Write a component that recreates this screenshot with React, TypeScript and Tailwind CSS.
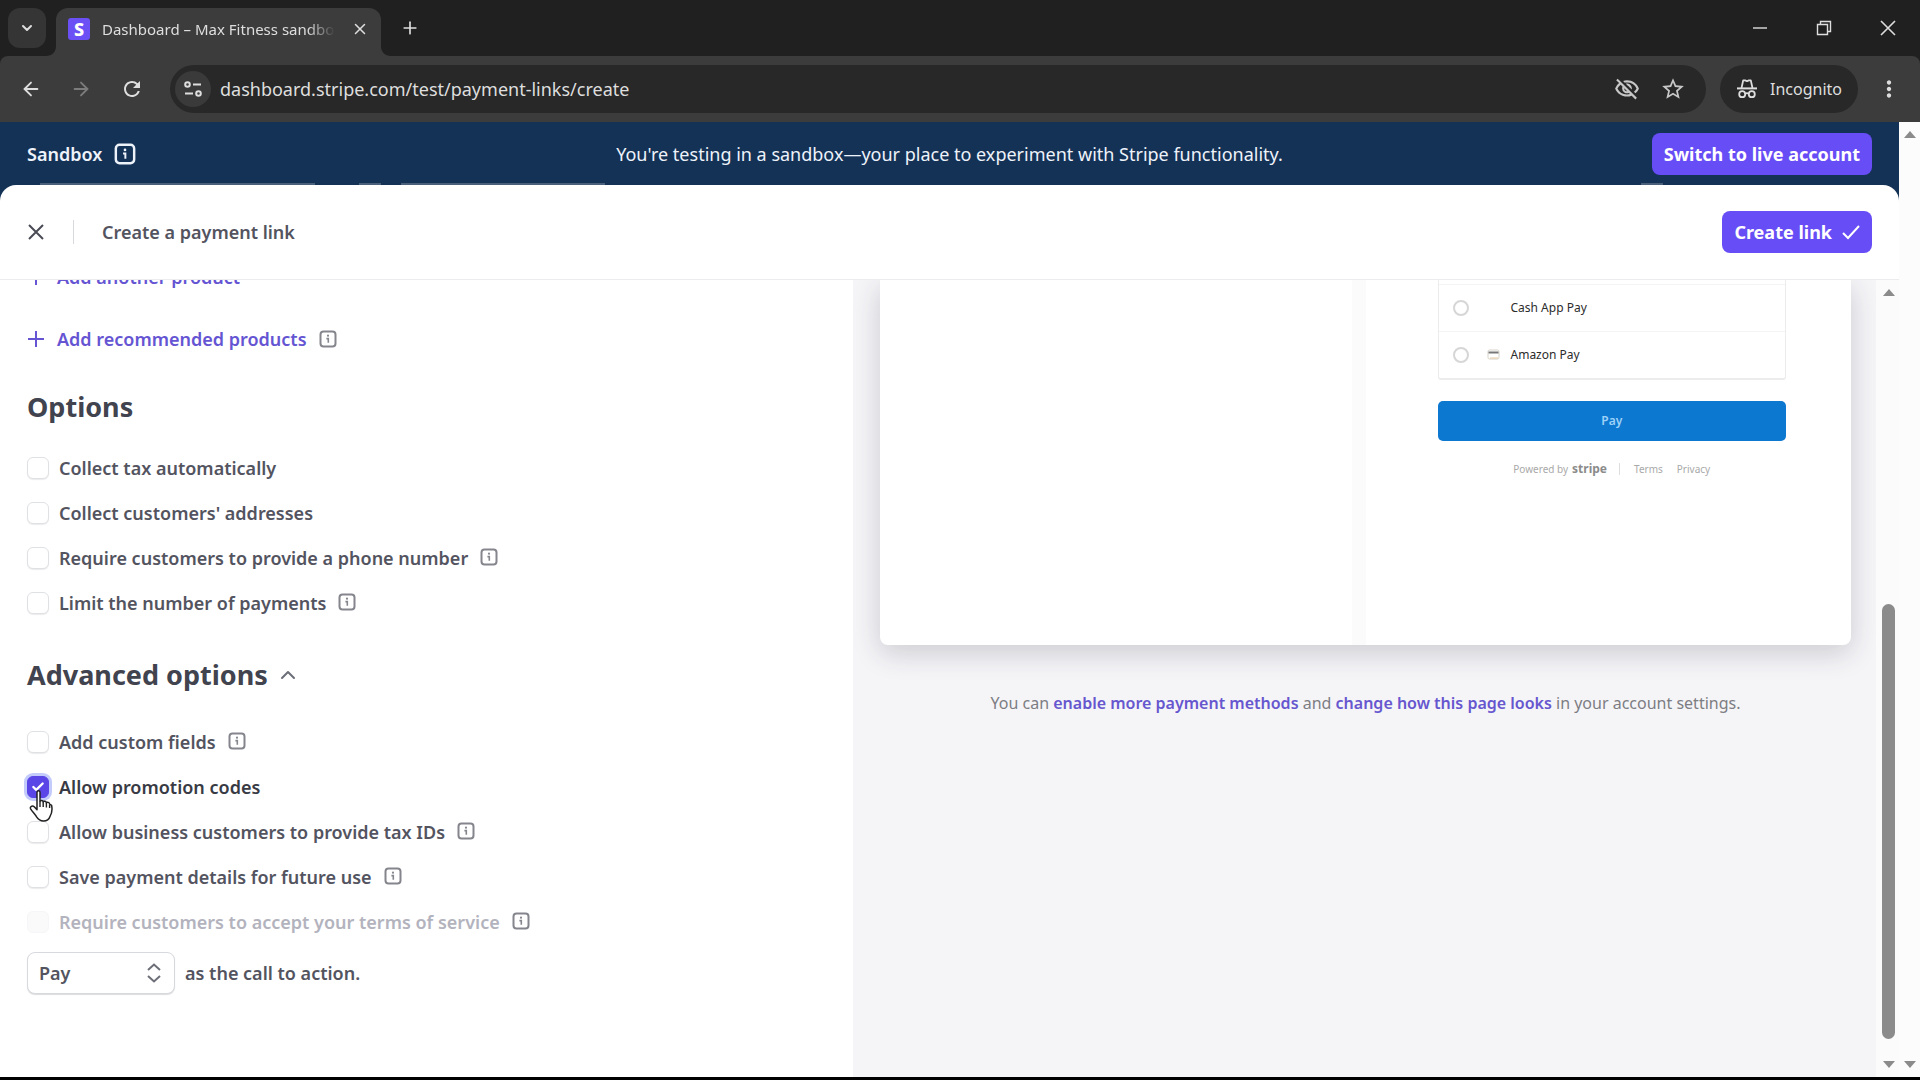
import type { ReactNode } from "react";
import { ArrowLeft, ArrowRight, Check, ChevronDown, ChevronUp, Plus, X } from "lucide-react";
import { MdMoreVert, MdOutlineStarBorder, MdOutlineVisibilityOff, MdRefresh } from "react-icons/md";

type Option = {
    id: string;
    label: string;
    info?: boolean;
    checked?: boolean;
    disabled?: boolean;
};

const basicOptions: Option[] = [
    { id: "tax", label: "Collect tax automatically" },
    { id: "addresses", label: "Collect customers' addresses" },
    { id: "phone", label: "Require customers to provide a phone number", info: true },
    { id: "limit", label: "Limit the number of payments", info: true },
];

const advancedOptions: Option[] = [
    { id: "custom-fields", label: "Add custom fields", info: true },
    { id: "promo", label: "Allow promotion codes", checked: true },
    { id: "tax-ids", label: "Allow business customers to provide tax IDs", info: true },
    { id: "save", label: "Save payment details for future use", info: true },
    { id: "terms", label: "Require customers to accept your terms of service", info: true, disabled: true },
];

function InfoIcon({ className }: { className?: string }) {
    return (
        <svg viewBox="0 0 18 18" fill="none" className={className} aria-hidden="true">
            <rect x="1.5" y="1.5" width="15" height="15" rx="3" stroke="currentColor" strokeWidth="2" />
            <circle cx="9" cy="5.7" r="1.1" fill="currentColor" />
            <path d="M7.4 8.6H9.3V12.8" stroke="currentColor" strokeWidth="1.6" />
        </svg>
    );
}

function IncognitoIcon() {
    return (
        <svg viewBox="0 0 22 22" fill="none" className="w-[22px] h-[22px]" stroke="currentColor" strokeWidth="1.8" aria-hidden="true">
            <path d="M5.5 10L7.2 2.4H9.2L11 3.2L12.8 2.4H14.8L16.5 10" strokeLinejoin="round" />
            <path d="M1 10.4H21" strokeWidth="2" />
            <circle cx="6.2" cy="16.2" r="3" />
            <circle cx="15.8" cy="16.2" r="3" />
            <path d="M9.2 15.8C10.3 15 11.7 15 12.8 15.8" />
        </svg>
    );
}

function SiteSettingsIcon() {
    return (
        <svg viewBox="0 0 20 20" fill="none" className="w-5 h-5" stroke="currentColor" strokeWidth="2" aria-hidden="true">
            <circle cx="4.5" cy="5.5" r="2.3" />
            <path d="M10 5.5H18M2 14.5H10" />
            <circle cx="15.5" cy="14.5" r="2.3" />
        </svg>
    );
}

function HandCursor() {
    return (
        <svg viewBox="0 0 24 32" className="absolute left-0.5 top-3.5 z-10 w-6 h-8" aria-hidden="true">
            <path
                d="M8 2.2C8 .4 11 .4 11 2.2V11.5C11.4 10 14 10.2 14.2 11.8C14.8 10.7 17.2 11 17.4 12.8C18.2 11.8 20.4 12.2 20.6 14L22.6 15.4C23.4 19 23 23 21 26.5C20 29.5 18 31 14.5 31C11 31 9.4 29.8 7.8 27.2C6 24 3.6 22 1.6 18.8C.6 16.6 3.4 15 5.2 16.8L8 19.6Z"
                fill="#fff"
                stroke="#222"
                strokeWidth="1.5"
                strokeLinejoin="round"
            />
            <path d="M11 11.5V17M14.2 12V17M17.4 13V17.4M20.6 14.4V18" stroke="#222" strokeWidth="1.4" fill="none" />
        </svg>
    );
}

function ScrollArrow({ down }: { down?: boolean }) {
    return (
        <svg viewBox="0 0 12 7" className="w-3 h-[7px] fill-[#8b8b8b]" aria-hidden="true">
            {down ? <path d="M0 0H12L6 7Z" /> : <path d="M0 7H12L6 0Z" />}
        </svg>
    );
}

function BrowserChrome() {
    return (
        <header className="bg-[#202020] text-[#dedede]">
            <div className="flex items-end h-14 pl-2">
                <button aria-label="Search tabs" className="flex items-center justify-center w-[38px] h-10 mb-2 rounded-xl bg-[#353535]">
                    <ChevronDown className="w-4 h-4" strokeWidth={3} />
                </button>
                <div className="relative flex items-center w-[325px] h-12 ml-[10px] px-3 pb-1.5 rounded-t-xl bg-[#3c3c3c]">
                    <svg viewBox="0 0 10 10" className="absolute -left-[10px] bottom-0 w-[10px] h-[10px] fill-[#3c3c3c]" aria-hidden="true">
                        <path d="M10 0V10H0C6 10 10 6 10 0Z" />
                    </svg>
                    <svg viewBox="0 0 10 10" className="absolute -right-[10px] bottom-0 w-[10px] h-[10px] fill-[#3c3c3c]" aria-hidden="true">
                        <path d="M0 0V10H10C4 10 0 6 0 0Z" />
                    </svg>
                    <span className="flex items-center justify-center w-[22px] h-[22px] rounded-[3px] bg-[#6a50f5] text-white text-lg font-extrabold leading-none">S</span>
                    <span className="flex-1 ml-3 overflow-hidden whitespace-nowrap text-[15px] leading-6 [mask-image:linear-gradient(90deg,#000_88%,transparent)]">
                        Dashboard – Max Fitness sandbox
                    </span>
                    <button aria-label="Close tab" className="ml-4">
                        <X className="w-[18px] h-[18px]" strokeWidth={2} />
                    </button>
                </div>
                <button aria-label="New tab" className="ml-[19px] mb-[18px]">
                    <Plus className="w-5 h-5" strokeWidth={2} />
                </button>
                <div className="flex gap-12 ml-auto mr-6 mb-5">
                    <button aria-label="Minimize">
                        <svg viewBox="0 0 16 16" className="w-4 h-4" stroke="currentColor" strokeWidth="1.4" fill="none">
                            <path d="M1 8H15" />
                        </svg>
                    </button>
                    <button aria-label="Restore">
                        <svg viewBox="0 0 16 16" className="w-4 h-4" stroke="currentColor" strokeWidth="1.4" fill="none">
                            <path d="M1.5 4.5H11.5V14.5H1.5ZM4.5 4.5V1.5H14.5V11.5H11.5" />
                        </svg>
                    </button>
                    <button aria-label="Close window">
                        <svg viewBox="0 0 16 16" className="w-4 h-4" stroke="currentColor" strokeWidth="1.6" fill="none">
                            <path d="M1 1L15 15M15 1L1 15" />
                        </svg>
                    </button>
                </div>
            </div>
            <div className="flex items-center h-[66px] pl-5 pr-[18px] rounded-t-lg bg-[#3c3c3c]">
                <button aria-label="Back">
                    <ArrowLeft className="w-[22px] h-[22px]" strokeWidth={2} />
                </button>
                <button aria-label="Forward" className="ml-7 text-[#7c7c7c]">
                    <ArrowRight className="w-[22px] h-[22px]" strokeWidth={2} />
                </button>
                <button aria-label="Reload" className="ml-7">
                    <MdRefresh className="w-6 h-6" />
                </button>
                <div className="flex flex-1 items-center h-12 ml-[26px] pl-[5px] pr-5 rounded-full bg-[#282828]">
                    <span className="flex items-center justify-center w-9 h-9 rounded-full bg-[#3a3a3a]">
                        <SiteSettingsIcon />
                    </span>
                    <input
                        aria-label="Address"
                        defaultValue="dashboard.stripe.com/test/payment-links/create"
                        className="flex-1 ml-[9px] bg-transparent text-lg leading-6 outline-none"
                    />
                    <MdOutlineVisibilityOff className="w-[26px] h-[26px] text-[#c7c7c7]" />
                    <MdOutlineStarBorder className="w-[26px] h-[26px] ml-5 text-[#c7c7c7]" />
                </div>
                <button className="flex items-center h-12 ml-[14px] pl-4 pr-4 gap-3 rounded-full bg-[#282828] text-base leading-6">
                    <IncognitoIcon />
                    Incognito
                </button>
                <button aria-label="Menu" className="ml-[18px]">
                    <MdMoreVert className="w-[26px] h-[26px]" />
                </button>
            </div>
        </header>
    );
}

function SandboxBanner() {
    return (
        <div className="relative text-[#eef3fa]">
            <div className="grid grid-cols-[1fr_auto_1fr] items-center h-[63px] px-[27px]">
                <div className="flex items-center gap-3 text-lg leading-6 font-semibold">
                    Sandbox
                    <InfoIcon className="w-[22px] h-[22px]" />
                </div>
                <p className="text-lg leading-6">You're testing in a sandbox—your place to experiment with Stripe functionality.</p>
                <button className="justify-self-end h-[42px] px-3 rounded-lg bg-[#674df5] text-lg leading-6 font-bold text-white">
                    Switch to live account
                </button>
            </div>
            {/* edge of the page behind the sheet */}
            <div className="absolute inset-x-0 bottom-0 flex h-0.5 px-10">
                <span className="w-[275px] bg-[#4a607a]" />
                <span className="w-[22px] ml-11 bg-[#4a607a]" />
                <span className="w-[204px] ml-5 bg-[#4a607a]" />
                <span className="w-[22px] ml-auto mr-[196px] bg-[#4a607a]" />
            </div>
        </div>
    );
}

function OptionRow({ option }: { option: Option }) {
    return (
        <div className="flex items-center h-[45px]">
            <div className="relative w-[22px] h-[22px]">
                <input
                    id={option.id}
                    type="checkbox"
                    defaultChecked={option.checked}
                    disabled={option.disabled}
                    className="block appearance-none w-[22px] h-[22px] rounded-md border border-[#e0e1e5] bg-white shadow-[0_1px_1px_rgba(0,0,0,0.08)] checked:border-[#5a45e6] checked:bg-[#5a45e6] checked:shadow-[0_0_0_3px_#c3cbfb] disabled:border-[#f6f6f8] disabled:bg-[#fafafb] disabled:shadow-none"
                />
                {option.checked && (
                    <>
                        <Check className="absolute left-1 top-1 w-[14px] h-[14px] text-white pointer-events-none" strokeWidth={4} />
                        <HandCursor />
                    </>
                )}
            </div>
            <label
                htmlFor={option.id}
                className={
                    option.disabled
                        ? "ml-[10px] text-lg leading-6 font-semibold text-[#b3b3be]"
                        : option.checked
                          ? "ml-[10px] text-lg leading-6 font-semibold text-[#383a44]"
                          : "ml-[10px] text-lg leading-6 font-semibold text-[#53545f]"
                }
            >
                {option.label}
            </label>
            {option.info && <InfoIcon className="w-[18px] h-[18px] ml-3 mb-[2px] text-[#85868d]" />}
        </div>
    );
}

function AddButton({ children }: { children: ReactNode }) {
    return (
        <button className="flex items-center gap-3 text-lg leading-6 font-semibold text-[#6555d3]">
            <svg viewBox="0 0 18 18" className="w-[18px] h-[18px]" stroke="currentColor" strokeWidth="2" fill="none" aria-hidden="true">
                <path d="M9 1V17M1 9H17" />
            </svg>
            {children}
        </button>
    );
}

function SettingsPanel() {
    return (
        <section className="w-[853px] shrink-0 px-[27px] overflow-hidden bg-white">
            <div className="-mt-[15px]">
                <AddButton>Add another product</AddButton>
            </div>
            <div className="flex items-center gap-3 mt-[38px]">
                <AddButton>Add recommended products</AddButton>
                <InfoIcon className="w-[18px] h-[18px] text-[#85868d]" />
            </div>
            <h2 className="mt-[38px] text-[27px] leading-9 font-bold text-[#41434e]">Options</h2>
            <div className="mt-5">
                {basicOptions.map((option) => (
                    <OptionRow key={option.id} option={option} />
                ))}
            </div>
            <h2 className="mt-8 text-[27px] leading-9 font-bold text-[#41434e]">
                <button className="flex items-center gap-2">
                    Advanced options
                    <ChevronUp className="w-6 h-6 text-[#6c6e78]" strokeWidth={2} />
                </button>
            </h2>
            <div className="mt-[26px]">
                {advancedOptions.map((option) => (
                    <OptionRow key={option.id} option={option} />
                ))}
            </div>
            <div className="flex items-center gap-[10px] mt-2 text-lg leading-6 font-semibold text-[#53545f]">
                <div className="relative">
                    <select
                        id="cta"
                        className="block appearance-none w-[148px] h-[42px] pl-[11px] rounded-lg border border-[#d8d9df] bg-white shadow-[0_1px_1px_rgba(0,0,0,0.14)]"
                    >
                        <option>Pay</option>
                    </select>
                    <svg viewBox="0 0 14 20" className="absolute right-[14px] top-[11px] w-[14px] h-5 pointer-events-none" fill="none" stroke="#6c6e78" strokeWidth="2" aria-hidden="true">
                        <path d="M1 7L7 1.5L13 7M1 13L7 18.5L13 13" />
                    </svg>
                </div>
                <label htmlFor="cta">as the call to action.</label>
            </div>
        </section>
    );
}

function PaymentMethod({ id, name, icon }: { id: string; name: string; icon?: ReactNode }) {
    return (
        <div className="flex items-center h-[47px] pl-[14px] border-t border-[#f4f4f4]">
            <input id={id} type="radio" name="method" className="appearance-none w-4 h-4 rounded-full border-2 border-[#d6d6d6] bg-white" />
            <span className="flex justify-center w-[14px] ml-[18px]">{icon}</span>
            <label htmlFor={id} className="ml-[10px] text-xs leading-5 text-[#2c2c2c]">
                {name}
            </label>
        </div>
    );
}

function PreviewPanel() {
    return (
        <section className="flex flex-1 flex-col items-center min-w-0 pl-[27px] pr-[25px] overflow-hidden bg-[#f5f5f8]">
            <div className="grid grid-cols-2 w-full h-[365px] shrink-0 rounded-b-lg bg-white shadow-[0_8px_28px_rgba(40,40,55,0.2)]">
                <div className="border-r-[14px] border-[#fbfbfb]" />
                <div className="pl-[72px] pr-[65px]">
                    <div className="pt-1 border-x border-b-2 border-[#ececec] rounded-b-[3px]">
                        <PaymentMethod id="cash" name="Cash App Pay" />
                        <PaymentMethod
                            id="amazon"
                            name="Amazon Pay"
                            icon={
                                <svg viewBox="0 0 14 12" className="w-[14px] h-3" fill="none" aria-hidden="true">
                                    <rect x="1" y="1" width="11" height="9" rx="1.5" stroke="#d8d2c8" />
                                    <path d="M1.5 3.5H11.5" stroke="#777" strokeWidth="2" />
                                    <path d="M3 9H11" stroke="#e5c9a0" />
                                </svg>
                            }
                        />
                    </div>
                    <button className="block w-full h-10 mt-[21px] rounded-[5px] bg-[#0c78d0] text-xs leading-5 font-semibold text-[#9fd2f8]">Pay</button>
                    <div className="flex justify-center items-center mt-[18px] text-[10px] leading-5 text-[#a9a9a9]">
                        Powered by
                        <span className="ml-1 text-xs leading-5 font-bold text-[#8b8b8b]">stripe</span>
                        <span className="w-px h-3 ml-3 bg-[#dedede]" />
                        <a href="#terms" className="ml-[14px]">Terms</a>
                        <a href="#privacy" className="ml-[14px]">Privacy</a>
                    </div>
                </div>
            </div>
            <p className="mt-[46px] text-base leading-6 text-[#7d7d83]">
                You can{" "}
                <a href="#methods" className="font-semibold text-[#6757cf]">enable more payment methods</a> and{" "}
                <a href="#branding" className="font-semibold text-[#6757cf]">change how this page looks</a> in your account settings.
            </p>
        </section>
    );
}

export default function App() {
    return (
        <div className="flex flex-col h-screen overflow-hidden border-b-[3px] border-black font-['Noto_Sans','Open_Sans',sans-serif]">
            <BrowserChrome />
            <div className="flex flex-1 min-h-0">
                <main className="flex flex-1 flex-col min-w-0 bg-[#143156]">
                    <SandboxBanner />
                    <div className="flex flex-1 flex-col min-h-0 rounded-t-2xl overflow-hidden bg-white">
                        <div className="flex items-center h-[95px] shrink-0 px-[27px] border-b border-[#ececef]">
                            <button aria-label="Close">
                                <svg viewBox="0 0 18 18" className="w-[18px] h-[18px]" stroke="#4a4b55" strokeWidth="2" fill="none">
                                    <path d="M2 2L16 16M16 2L2 16" />
                                </svg>
                            </button>
                            <span className="w-px h-6 ml-7 bg-[#d8d9df]" />
                            <h1 className="ml-7 text-lg leading-6 font-semibold text-[#53545f]">Create a payment link</h1>
                            <button className="flex items-center h-[42px] ml-auto px-3 gap-[10px] rounded-lg bg-[#674df5] text-lg leading-6 font-bold text-white">
                                Create link
                                <svg viewBox="0 0 18 18" className="w-[18px] h-[18px]" stroke="currentColor" strokeWidth="2" fill="none" aria-hidden="true">
                                    <path d="M1 10L6 15L17 3" />
                                </svg>
                            </button>
                        </div>
                        <div className="flex flex-1 min-h-0">
                            <SettingsPanel />
                            <PreviewPanel />
                            <div className="flex flex-col items-center w-[23px] pl-[2px] pt-[9px] pb-[9px] bg-[#fbfbfc]">
                                <ScrollArrow />
                                <div className="flex-1" />
                                <div className="w-[13px] h-[435px] rounded-full bg-[#8b8b8b]" />
                                <div className="h-[22px]" />
                                <ScrollArrow down />
                            </div>
                        </div>
                    </div>
                </main>
                <div className="flex flex-col items-center justify-between w-[21px] pt-[9px] pb-[9px] bg-[#fcfcfc]">
                    <ScrollArrow />
                    <ScrollArrow down />
                </div>
            </div>
        </div>
    );
}
